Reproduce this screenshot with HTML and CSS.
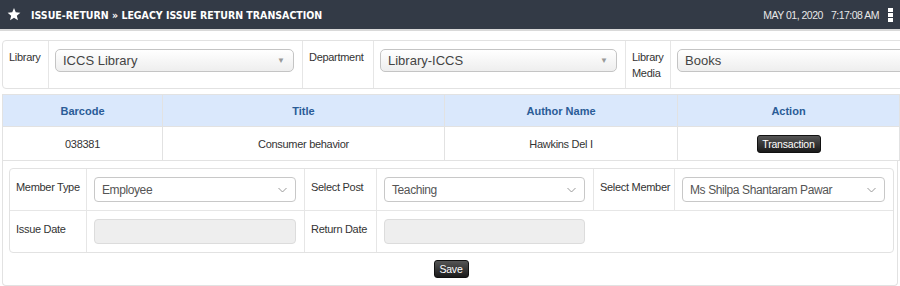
FILE: index.html
```html
<!DOCTYPE html>
<html lang="en">
  <head>
    <meta charset="UTF-8" />
    <title>Legacy Issue Return Transaction</title>
    <link rel="stylesheet" href="styles.css">
  </head>
  <body>
    <header class="topBar">
      <svg class="star" width="14" height="13" viewBox="0 0 24 23">
        <path fill="#fff" d="M12 0l3.1 7.6 8.2.6-6.3 5.3 2 8-7-4.4-7 4.4 2-8L.7 8.2l8.2-.6z"/>
      </svg>
      <h1>Issue-Return &raquo; Legacy Issue Return Transaction</h1>
      <div class="clock">
        <span>MAY 01, 2020</span>
        <span>7:17:08 AM</span>
      </div>
      <div class="kebab"><i></i><i></i><i></i></div>
    </header>

    <main>
      <table class="filters">
        <colgroup>
          <col style="width:45px"><col style="width:254px">
          <col style="width:71px"><col style="width:252px">
          <col style="width:45px"><col style="width:280px">
        </colgroup>
        <tr>
          <td class="lbl">Library</td>
          <td><div class="drop">ICCS Library<span class="tri">&#9660;</span></div></td>
          <td class="lbl">Department</td>
          <td><div class="drop">Library-ICCS<span class="tri">&#9660;</span></div></td>
          <td class="lbl wrap">Library Media</td>
          <td><div class="drop">Books<span class="tri">&#9660;</span></div></td>
        </tr>
      </table>

      <table class="books">
        <colgroup>
          <col style="width:160px"><col style="width:282px">
          <col style="width:233px"><col style="width:222px">
        </colgroup>
        <thead>
          <tr><th>Barcode</th><th>Title</th><th>Author Name</th><th>Action</th></tr>
        </thead>
        <tbody>
          <tr>
            <td>038381</td>
            <td>Consumer behavior</td>
            <td>Hawkins Del I</td>
            <td><button class="darkBtn">Transaction</button></td>
          </tr>
        </tbody>
      </table>

      <div class="issueBox">
        <table class="issueForm">
          <colgroup>
            <col style="width:76px"><col style="width:218px">
            <col style="width:72px"><col style="width:217px">
            <col style="width:81px"><col style="width:219px">
          </colgroup>
          <tr>
            <td class="lbl">Member Type</td>
            <td><div class="pick">Employee<svg class="chev" width="9" height="6" viewBox="0 0 9 6"><path d="M.5 1l4 4 4-4" fill="none" stroke="#999"/></svg></div></td>
            <td class="lbl">Select Post</td>
            <td><div class="pick">Teaching<svg class="chev" width="9" height="6" viewBox="0 0 9 6"><path d="M.5 1l4 4 4-4" fill="none" stroke="#999"/></svg></div></td>
            <td class="lbl">Select Member</td>
            <td><div class="pick">Ms Shilpa Shantaram Pawar<svg class="chev" width="9" height="6" viewBox="0 0 9 6"><path d="M.5 1l4 4 4-4" fill="none" stroke="#999"/></svg></div></td>
          </tr>
          <tr class="second">
            <td class="lbl">Issue Date</td>
            <td><div class="dateBox"></div></td>
            <td class="lbl">Return Date</td>
            <td><div class="dateBox"></div></td>
            <td class="blank"></td>
            <td class="blank"></td>
          </tr>
        </table>
        <div class="saveRow">
          <button class="darkBtn">Save</button>
        </div>
      </div>
    </main>
  </body>
</html>
```

FILE: styles.css
```css
html, body {
  margin: 0;
  overflow: hidden;
}
body {
  font-family: 'Liberation Sans', Arial, sans-serif;
  font-size: 11px;
  letter-spacing: -0.3px;
  color: #333;
  background: #fff;
}
.topBar {
  display: flex;
  align-items: center;
  height: 29px;
  padding: 0 7px;
  background: #333a46;
  border-bottom: 2px solid #d9d9d9;
  color: #fff;
}
.star {
  flex: none;
  margin-top: -1px;
}
.topBar h1 {
  margin: 0 0 0 10px;
  font-family: 'DejaVu Sans Condensed', sans-serif;
  font-size: 10.5px;
  font-weight: bold;
  text-transform: uppercase;
  letter-spacing: 0;
  flex: 1;
}
.clock {
  display: flex;
  gap: 8px;
  font-size: 10.5px;
  letter-spacing: -0.5px;
  color: #e8e8e8;
}
.kebab {
  display: flex;
  flex-direction: column;
  gap: 1px;
  margin-left: 9px;
}
.kebab i {
  display: block;
  width: 5px;
  height: 4px;
  background: #fff;
}
main {
  padding: 9px 0 0 2px;
}
.lbl {
  vertical-align: top;
  white-space: nowrap;
  color: #333;
}
.lbl.wrap {
  white-space: normal;
}

/* library filters */
.filters {
  table-layout: fixed;
  width: 947px;
  border-spacing: 0;
  border: 1px solid #e2e2e2;
  border-radius: 4px;
}
.filters td {
  padding: 8px 8px 7px 6px;
  line-height: 16px;
  vertical-align: top;
  border-left: 1px solid #e6e6e6;
}
.filters td:first-child {
  border-left: none;
}
.drop {
  position: relative;
  height: 21px;
  line-height: 21px;
  padding: 0 0 0 7px;
  font-size: 13px;
  letter-spacing: 0;
  color: #444;
  border: 1px solid #c4c4c4;
  border-radius: 5px;
  background: linear-gradient(#fff, #eeeeee);
}
.tri {
  position: absolute;
  right: 8px;
  top: 0;
  font-size: 8px;
  color: #999;
}

/* book list */
.books {
  table-layout: fixed;
  width: 897px;
  margin-top: 5px;
  border-collapse: collapse;
  border: 1px solid #e2e2e2;
}
.books th {
  height: 31px;
  padding: 0;
  background: #dae8fc;
  color: #2a5c97;
  font-weight: bold;
  letter-spacing: 0;
  border: 1px solid #e2e2e2;
}
.books td {
  height: 33px;
  padding: 0;
  text-align: center;
  border: 1px solid #e2e2e2;
}
.darkBtn {
  font-family: inherit;
  font-size: 10.5px;
  letter-spacing: -0.2px;
  color: #fff;
  border: 1px solid #111;
  border-radius: 3px;
  background: linear-gradient(#555, #1a1a1a);
  padding: 0;
  height: 18px;
  line-height: 12px;
}
.books .darkBtn {
  width: 64px;
}

/* issue form */
.issueBox {
  width: 888px;
  padding: 7px 0 7px 6px;
  border: 1px solid #e2e2e2;
  border-top: none;
  border-radius: 0 0 4px 4px;
}
.issueForm {
  table-layout: fixed;
  width: 884px;
  border-spacing: 0;
  border: 1px solid #e2e2e2;
  border-radius: 4px;
}
.issueForm td {
  padding: 8px 8px 8px 6px;
  line-height: 20px;
  border-left: 1px solid #e6e6e6;
}
.issueForm td:first-child {
  border-left: none;
}
.issueForm .second td {
  border-top: 1px solid #e6e6e6;
}
.issueForm .second td.blank {
  border-left: none;
}
.issueForm td:nth-child(2n) {
  padding-left: 7px;
}
.pick {
  display: flex;
  align-items: center;
  justify-content: space-between;
  height: 23px;
  padding: 0 8px 0 7px;
  font-size: 12px;
  letter-spacing: -0.4px;
  color: #555;
  border: 1px solid #c8c8c8;
  border-radius: 4px;
  background: #fff;
}
.dateBox {
  height: 23px;
  border: 1px solid #dcdcdc;
  border-radius: 4px;
  background: #eee;
}
.saveRow {
  display: flex;
  justify-content: center;
  padding-top: 7px;
  padding-right: 4px;
}
.saveRow .darkBtn {
  width: 35px;
}
```
